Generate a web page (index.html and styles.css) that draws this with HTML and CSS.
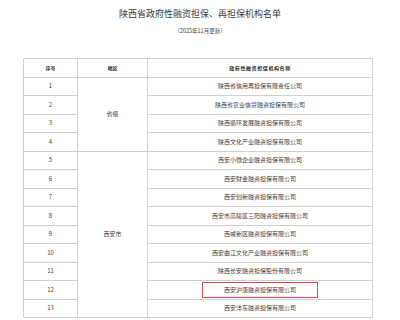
FILE: index.html
```html
<!DOCTYPE html>
<html lang="zh-CN">
<head>
<meta charset="utf-8">
<title>陕西省政府性融资担保、再担保机构名单</title>
<link rel="stylesheet" href="styles.css">
</head>
<body>
<div class="page">
  <h1 class="title">陕西省政府性融资担保、再担保机构名单</h1>
  <p class="subtitle">（2025年11月更新）</p>
  <table class="list">
    <colgroup>
      <col class="c-no">
      <col class="c-area">
      <col class="c-name">
    </colgroup>
    <thead>
      <tr><th>序号</th><th>地区</th><th class="wide">政府性融资担保机构名称</th></tr>
    </thead>
    <tbody>
      <tr><td>1</td><td rowspan="4">省级</td><td>陕西省信用再担保有限责任公司</td></tr>
      <tr><td>2</td><td>陕西省农业信贷融资担保有限公司</td></tr>
      <tr><td>3</td><td>陕西循环发展融资担保有限公司</td></tr>
      <tr><td>4</td><td>陕西文化产业融资担保有限公司</td></tr>
      <tr><td>5</td><td rowspan="9">西安市</td><td>西安小微企业融资担保有限公司</td></tr>
      <tr><td>6</td><td>西安财金融资担保有限公司</td></tr>
      <tr><td>7</td><td>西安创新融资担保有限公司</td></tr>
      <tr><td>8</td><td>西安市高陵区三阳融资担保有限公司</td></tr>
      <tr><td>9</td><td>西咸新区融资担保有限公司</td></tr>
      <tr><td>10</td><td>西安曲江文化产业融资担保有限公司</td></tr>
      <tr><td>11</td><td>陕西长安融资担保股份有限公司</td></tr>
      <tr><td>12</td><td><span class="marked">西安沪康融资担保有限公司</span></td></tr>
      <tr><td>13</td><td>西安沣东融资担保有限公司</td></tr>
    </tbody>
  </table>
</div>
</body>
</html>
```

FILE: styles.css
```css
html, body {
  margin: 0;
  padding: 0;
  background: #ffffff;
}

body {
  font-family: "Noto Sans CJK SC", "Noto Sans", "Liberation Sans", sans-serif;
  color: #3a3a3a;
}

.page {
  width: 400px;
  padding-top: 8px;
}

.title {
  margin: 0;
  font-size: 9px;
  line-height: 12px;
  font-weight: normal;
  text-align: center;
  color: #3a3a3a;
}

.subtitle {
  margin: 7px 0 0;
  font-size: 5.5px;
  line-height: 8px;
  text-align: center;
  color: #444444;
}

.list {
  margin: 23px 0 0 23px;
  width: 349px;
  border-collapse: collapse;
  table-layout: fixed;
  border: 1px solid #b4b4b4;
}

.c-no { width: 54px; }
.c-area { width: 70px; }
.c-name { width: 225px; }

.list th,
.list td {
  height: 17.5px;
  padding: 0;
  border: 1px solid #cfcfcf;
  text-align: center;
  vertical-align: middle;
  font-size: 6px;
  line-height: 8px;
  color: #3c3c3c;
}

.list th {
  font-size: 5px;
  font-weight: bold;
  color: #2a2a2a;
}

.list th.wide {
  letter-spacing: 0.6px;
}

.marked {
  position: relative;
  display: inline-block;
}

.marked::after {
  content: "";
  position: absolute;
  left: -22px;
  right: -22px;
  top: -4px;
  bottom: -4px;
  border: 1.5px solid #e2454b;
}
```
